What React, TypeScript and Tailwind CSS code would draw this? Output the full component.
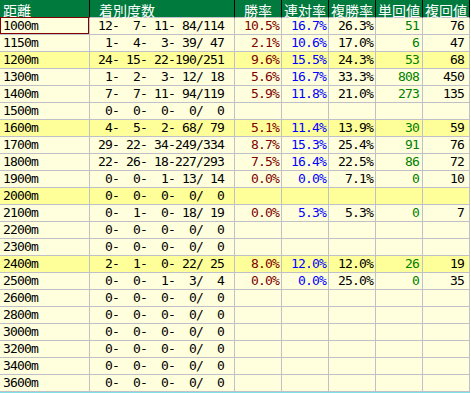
import React from "react";

type Row = {
  d: string;
  rec: string;
  w?: string;
  r?: string;
  p?: string;
  t?: string;
  f?: string;
  hl?: boolean;
};

const rows: Row[] = [
  { d: "1000m", rec: "12-  7- 11- 84/114", w: "10.5%", r: "16.7%", p: "26.3%", t: "51", f: "76" },
  { d: "1150m", rec: " 1-  4-  3- 39/ 47", w: "2.1%", r: "10.6%", p: "17.0%", t: "6", f: "47" },
  { d: "1200m", rec: "24- 15- 22-190/251", w: "9.6%", r: "15.5%", p: "24.3%", t: "53", f: "68", hl: true },
  { d: "1300m", rec: " 1-  2-  3- 12/ 18", w: "5.6%", r: "16.7%", p: "33.3%", t: "808", f: "450" },
  { d: "1400m", rec: " 7-  7- 11- 94/119", w: "5.9%", r: "11.8%", p: "21.0%", t: "273", f: "135" },
  { d: "1500m", rec: " 0-  0-  0-  0/  0" },
  { d: "1600m", rec: " 4-  5-  2- 68/ 79", w: "5.1%", r: "11.4%", p: "13.9%", t: "30", f: "59", hl: true },
  { d: "1700m", rec: "29- 22- 34-249/334", w: "8.7%", r: "15.3%", p: "25.4%", t: "91", f: "76" },
  { d: "1800m", rec: "22- 26- 18-227/293", w: "7.5%", r: "16.4%", p: "22.5%", t: "86", f: "72" },
  { d: "1900m", rec: " 0-  0-  1- 13/ 14", w: "0.0%", r: "0.0%", p: "7.1%", t: "0", f: "10" },
  { d: "2000m", rec: " 0-  0-  0-  0/  0", hl: true },
  { d: "2100m", rec: " 0-  1-  0- 18/ 19", w: "0.0%", r: "5.3%", p: "5.3%", t: "0", f: "7" },
  { d: "2200m", rec: " 0-  0-  0-  0/  0" },
  { d: "2300m", rec: " 0-  0-  0-  0/  0" },
  { d: "2400m", rec: " 2-  1-  0- 22/ 25", w: "8.0%", r: "12.0%", p: "12.0%", t: "26", f: "19", hl: true },
  { d: "2500m", rec: " 0-  0-  1-  3/  4", w: "0.0%", r: "0.0%", p: "25.0%", t: "0", f: "35" },
  { d: "2600m", rec: " 0-  0-  0-  0/  0" },
  { d: "2800m", rec: " 0-  0-  0-  0/  0" },
  { d: "3000m", rec: " 0-  0-  0-  0/  0" },
  { d: "3200m", rec: " 0-  0-  0-  0/  0" },
  { d: "3400m", rec: " 0-  0-  0-  0/  0" },
  { d: "3600m", rec: " 0-  0-  0-  0/  0" },
];

const mono = "font-['DejaVu_Sans_Mono',monospace] text-[13px] tracking-[-0.83px] whitespace-pre leading-[16px]";
const head =
  "h-[18px] pt-[1px] bg-[#007a3d] border-r border-r-black border-b border-b-[#c0c0c8] text-white text-[14px] leading-[18px] font-['Noto_Sans_CJK_JP',sans-serif]";

export default function App() {
  return (
    <div className="w-[471px] h-[393px] bg-white overflow-hidden">
      <div className="grid grid-cols-[90px_145px_47px_47px_47px_47px_47px_1px]">
        <div className={`${head} pl-[3px]`}>距離</div>
        <div className={`${head} pl-[9px]`}>着別度数</div>
        {["勝率", "連対率", "複勝率", "単回値", "複回値"].map((h) => (
          <div key={h} className={`${head} text-center`}>{h}</div>
        ))}
        <div className="h-[18px] bg-white" />
        {rows.map((row, i) => {
          const bg = row.hl ? "bg-[#ffff99]" : "bg-[#ffffdd]";
          const cell = `h-[17px] border-r border-b border-[#c0c0c8] ${bg} ${mono}`;
          return (
            <React.Fragment key={row.d}>
              <div className={`${cell} pl-[3px] ${i === 0 ? "relative" : ""}`}>
                {row.d}
                {i === 0 && <div className="absolute left-0 top-[-1px] w-[89px] h-[17px] border border-[#800000]" />}
              </div>
              <div className={`${cell} text-right pr-[10px]`}>{row.rec}</div>
              <div className={`${cell} text-right pr-[2px] text-[#800000]`}>{row.w ?? ""}</div>
              <div className={`${cell} text-right pr-[2px] text-[#0000ff]`}>{row.r ?? ""}</div>
              <div className={`${cell} text-right pr-[2px] text-black`}>{row.p ?? ""}</div>
              <div className={`${cell} text-right pr-[3px] text-[#008000]`}>{row.t ?? ""}</div>
              <div className={`${cell} text-right pr-[5px] text-black`}>{row.f ?? ""}</div>
              <div className="h-[17px] bg-white" />
            </React.Fragment>
          );
        })}
      </div>
      <div className="h-[1px] w-[470px] bg-[#80e0e8]" />
    </div>
  );
}
